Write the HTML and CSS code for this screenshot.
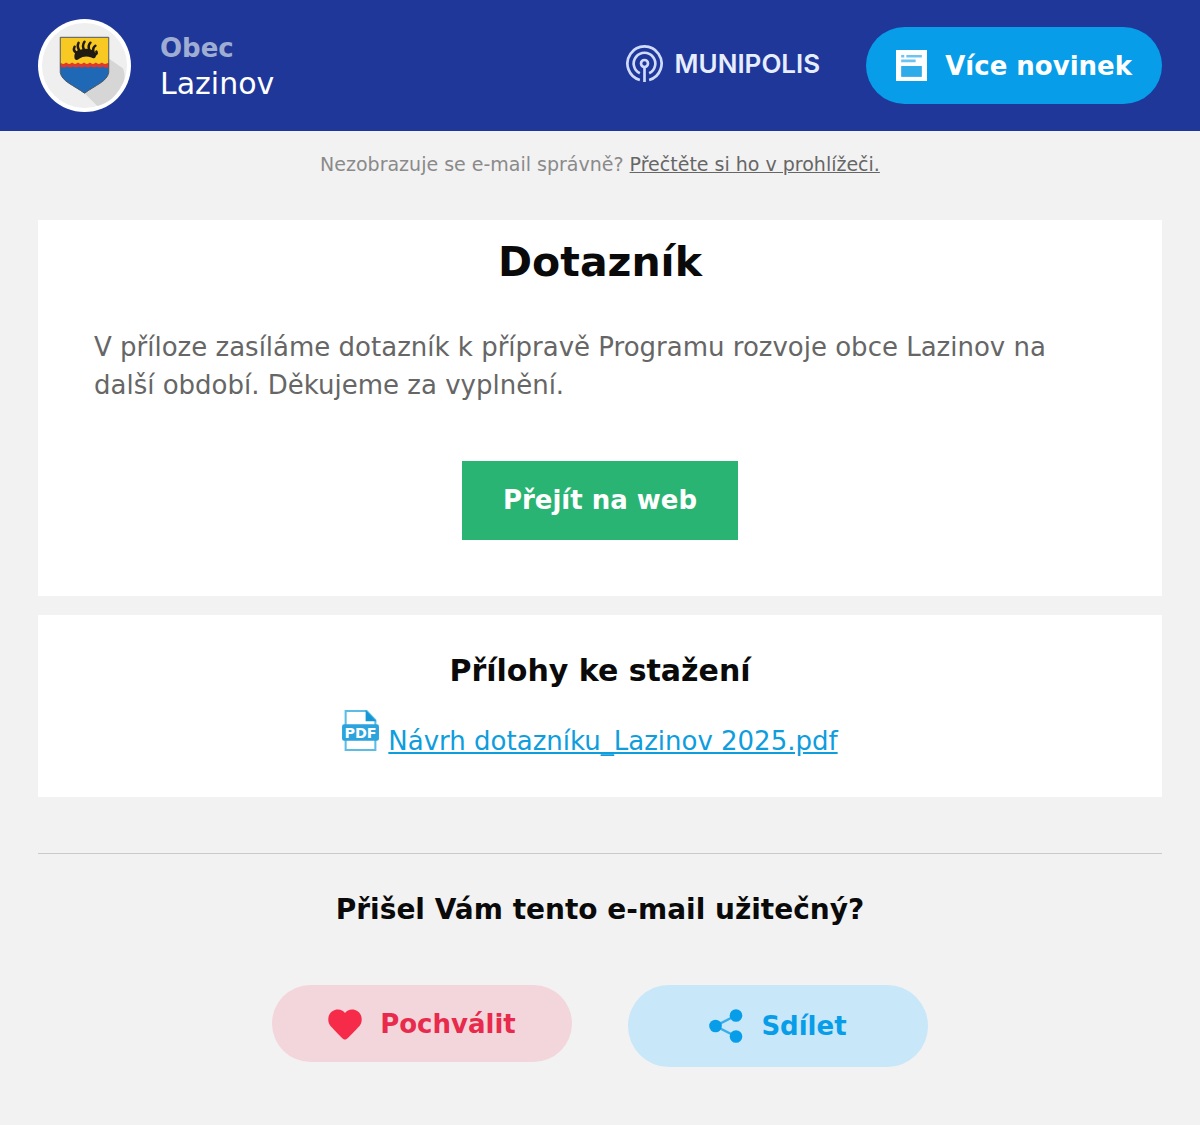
FILE: index.html
```html
<!DOCTYPE html>
<html lang="cs">
<head>
<meta charset="utf-8">
<meta name="viewport" content="width=device-width, initial-scale=1">
<title>Dotazník – Obec Lazinov</title>
<link rel="stylesheet" href="styles.css">
</head>
<body>
<header class="header">
  <svg class="crest" viewBox="0 0 94 94" aria-hidden="true">
    <circle cx="47" cy="47" r="47" fill="#fff"/>
    <circle cx="47" cy="47" r="43" fill="#efefef"/>
    <path d="M71.500 40 L86 50 Q90 60 84 68 Q76 84 60 88 L47 75 Z" fill="#d6d6d6"/>
    <path d="M22.500 18.500 H71.500 V48 H22.500 Z" fill="#f8c823"/>
    <path d="M22.500 46 H71.500 V54 C70 63 58 67 47 75 C36 67 24 63 22.500 54 Z" fill="#1e68b5"/>
    <path d="M22.500 44 q3 3 6 0 q3 3 6 0 q3 3 6 0 q3 3 6 0 q3 3 6 0 q3 3 6 0 q3 3 6 0 q3 3 7 0 V49 q-3 1 -6 -1 q-3 2 -6 0 q-3 2 -6 0 q-3 2 -6 0 q-3 2 -6 0 q-3 2 -6 0 q-3 2 -6 0 q-3 2 -7 0 Z" fill="#e0392b"/>
    <path d="M37 40 C36 34 39 31 43 31 C48 29 55 30 58 34 C60 38 57 41 54 39 C49 37 45 38 42 40 C40 42 38 42 37 40 Z" fill="#1f1a12"/>
    <path d="M39 34 q-4 -2 -2 -6 M42 32 q-3 -4 -1 -8 M47 32 q-3 -5 0 -9 M52 32 q-2 -5 1 -8 M56 33 q-1 -4 2 -6 M58 36 q2 -1 1 -3" fill="none" stroke="#1f1a12" stroke-width="2.500" stroke-linecap="round"/>
    <path d="M22.500 18.500 H71.500 V54 C70 63 58 67 47 75 C36 67 24 63 22.500 54 Z" fill="none" stroke="#4e5560" stroke-width="1"/>
  </svg>
  <div class="sender">
    <strong class="sender-type">Obec</strong>
    <span class="sender-name">Lazinov</span>
  </div>
  <div class="brand">
    <svg class="brand-mark" viewBox="0 0 36 36" fill="none" stroke="#cfdcff" stroke-width="2.600" aria-hidden="true">
      <path d="M13.500 34 A16.600 16.600 0 1 1 22.500 34"/>
      <path d="M13.500 27.500 A10.500 10.500 0 1 1 22.500 27.500"/>
      <circle cx="18" cy="18" r="3.400"/>
      <path d="M18 21.500 V36"/>
    </svg>
    <span class="brand-name">MUNIPOLIS</span>
  </div>
  <a class="pill pill-news" href="#">
    <svg class="icon-news" viewBox="0 0 30 30" aria-hidden="true">
      <rect width="30" height="30" fill="#fff"/>
      <path d="M5 6 h3 M10 6 h15 M5 10.500 h14" stroke="#6cc5f1" stroke-width="2.500"/>
      <rect x="5" y="15.500" width="20" height="10.500" fill="#2fabea"/>
    </svg>
    Více novinek
  </a>
</header>

<main class="content">
  <p class="preview">Nezobrazuje se e-mail správně? <a class="preview-link" href="#">Přečtěte si ho v prohlížeči.</a></p>

  <article class="card message">
    <h1 class="title">Dotazník</h1>
    <p class="text">V příloze zasíláme dotazník k přípravě Programu rozvoje obce Lazinov na další období. Děkujeme za vyplnění.</p>
    <a class="web-button" href="#">Přejít na web</a>
  </article>

  <section class="card attachments">
    <h2 class="subtitle">Přílohy ke stažení</h2>
    <div class="file">
      <svg class="icon-pdf" viewBox="0 0 36 40" aria-hidden="true">
        <path d="M3.500 15 V1 H24 L32.500 10 V15 M3.500 28 V39 H32.500 V28" fill="#fff" stroke="#5bbce6" stroke-width="2"/>
        <path d="M23 0 L33.500 11 H23 Z" fill="#1497d4"/>
        <rect y="14" width="36" height="16" rx="2" fill="#2ba3dc"/>
        <text class="icon-pdf-label" x="18" y="27" text-anchor="middle">PDF</text>
      </svg>
      <a class="file-link" href="#">Návrh dotazníku_Lazinov 2025.pdf</a>
    </div>
  </section>

  <section class="feedback">
    <h2 class="question">Přišel Vám tento e-mail užitečný?</h2>
    <div class="actions">
      <button class="pill pill-praise" type="button">
        <svg class="icon-action" viewBox="0 0 34 34" aria-hidden="true">
          <path d="M17 32.500 C15 32.500 13.500 30.500 2.500 19 C-2 13 0.500 4 8.500 2.500 C12.500 2 15 3.500 17 6 C19 3.500 21.500 2 25.500 2.500 C33.500 4 36 13 31.500 19 C20.500 30.500 19 32.500 17 32.500 Z" fill="#f52b49"/>
        </svg>
        Pochválit
      </button>
      <button class="pill pill-share" type="button">
        <svg class="icon-action" viewBox="0 0 34 34" fill="#079de9" aria-hidden="true">
          <path d="M27 6.500 L6.500 17 L27 27.500" fill="none" stroke="#3aaeec" stroke-width="2.500"/>
          <circle cx="27" cy="6.500" r="6.300"/>
          <circle cx="6.500" cy="17" r="6.300"/>
          <circle cx="27" cy="27.500" r="6.300"/>
        </svg>
        Sdílet
      </button>
    </div>
  </section>
</main>
</body>
</html>
```

FILE: styles.css
```css
* {
  box-sizing: border-box;
}

body {
  margin: 0;
  background: #f2f2f2;
  color: #0a0a0a;
  font-family: "DejaVu Sans", sans-serif;
  font-size: 26px;
  line-height: 38px;
}

h1,
h2,
p {
  margin: 0;
}

.header {
  display: flex;
  align-items: center;
  min-height: 131px;
  padding: 0 38px;
  background: #1e3799;
}

.crest {
  width: 93px;
  height: 93px;
}

.sender {
  display: flex;
  flex-direction: column;
  margin-left: 29px;
  line-height: 36px;
}

.sender-type {
  color: #9fadd3;
}

.sender-name {
  color: #fff;
  font-size: 30px;
}

.brand {
  display: flex;
  align-items: center;
  gap: 12px;
  margin: 0 46px 4px auto;
}

.brand-mark {
  width: 37px;
  height: 37px;
}

.brand-name {
  color: #e6edff;
  font-family: Inter, sans-serif;
  font-size: 26px;
  font-weight: 600;
}

.pill {
  display: flex;
  align-items: center;
  justify-content: center;
  gap: 18px;
  border: 0;
  border-radius: 41px;
  font: inherit;
  font-weight: 700;
  text-decoration: none;
}

.pill-news {
  height: 77px;
  padding: 0 30px;
  background: #079de9;
  color: #fff;
}

.icon-news {
  width: 31px;
  height: 31px;
}

.content {
  padding: 0 38px 56px;
}

.preview {
  padding: 14px 0 37px;
  color: #8a8a8a;
  font-size: 19px;
  text-align: center;
}

.preview-link {
  color: #666;
}

.card {
  display: flex;
  flex-direction: column;
  align-items: center;
  background: #fff;
}

.message {
  padding: 16px 56px 56px;
}

.title {
  font-size: 41px;
  line-height: 52px;
}

.text {
  align-self: stretch;
  margin: 40px 0 57px;
  color: #666;
}

.web-button {
  padding: 20px 41px 21px;
  background: #29b473;
  color: #fff;
  font-weight: 700;
  text-decoration: none;
}

.attachments {
  margin-top: 19px;
  padding: 37px 56px;
}

.subtitle {
  font-size: 30px;
}

.file {
  display: flex;
  align-items: flex-end;
  gap: 9px;
  margin: 20px 20px 0 0;
}

.icon-pdf {
  width: 37px;
  height: 41px;
  margin-bottom: 9px;
}

.icon-pdf-label {
  fill: #fff;
  font-size: 14px;
  font-weight: 700;
}

.file-link {
  color: #0e9ddd;
}

.feedback {
  margin-top: 56px;
  padding-top: 37px;
  border-top: 1px solid #cacaca;
  text-align: center;
}

.question {
  font-size: 28px;
}

.actions {
  display: flex;
  flex-wrap: wrap;
  align-items: flex-start;
  justify-content: center;
  gap: 56px;
  margin-top: 56px;
}

.icon-action {
  width: 34px;
  height: 34px;
}

.pill-praise {
  width: 300px;
  height: 77px;
  background: #f2d6db;
  color: #e82a4c;
}

.pill-share {
  width: 300px;
  height: 82px;
  background: #c8e7f9;
  color: #079de9;
}
```
